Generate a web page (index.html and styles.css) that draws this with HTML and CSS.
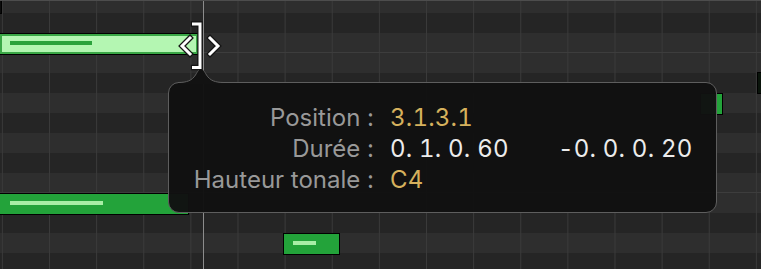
FILE: index.html
```html
<!DOCTYPE html>
<html lang="fr">
  <head>
    <meta charset="UTF-8" />
    <title>Piano Roll</title>
    <link rel="stylesheet" href="styles.css">
  </head>
  <body>
    <div class="roll">
      <div class="rows">
        <div class="row key-white"></div>
        <div class="row key-black"></div>
        <div class="row key-white octave-edge"></div>
        <div class="row key-white"></div>
        <div class="row key-black"></div>
        <div class="row key-white"></div>
        <div class="row key-black"></div>
        <div class="row key-white"></div>
        <div class="row key-black"></div>
        <div class="row key-white octave-edge"></div>
        <div class="row key-white"></div>
        <div class="row key-black"></div>
        <div class="row key-white"></div>
        <div class="row key-black"></div>
      </div>

      <div class="playhead"></div>

      <!-- notes -->
      <div class="note note-edge-tl"></div>
      <div class="note note-edge-tr"></div>
      <div class="note note-selected">
        <span class="vel vel-selected"></span>
      </div>
      <div class="note note-e3">
        <span class="vel vel-e3"></span>
      </div>
      <div class="note note-csharp3">
        <span class="vel vel-csharp3"></span>
      </div>
      <div class="note note-a3"></div>

      <!-- info tooltip -->
      <div class="tip">
        <svg class="tip-notch" width="46" height="16" viewBox="0 0 46 16">
          <path class="notch-fill" d="M0 14.5 C9 14.5 14 12.5 17.5 7 C19.5 3.5 21 1 23 1 C25 1 26.5 3.5 28.5 7 C32 12.5 37 14.5 46 14.5 L46 16 L0 16 Z" />
          <path class="notch-line" d="M0 14.5 C9 14.5 14 12.5 17.5 7 C19.5 3.5 21 1 23 1 C25 1 26.5 3.5 28.5 7 C32 12.5 37 14.5 46 14.5" />
        </svg>
        <div class="tip-grid">
          <span class="tip-label">Position :</span>
          <span class="tip-value gold">3.1.3.1</span>
          <span></span>

          <span class="tip-label">Durée :</span>
          <span class="tip-value">0. 1. 0. 60</span>
          <span class="tip-value">-0. 0. 0. 20</span>

          <span class="tip-label">Hauteur tonale :</span>
          <span class="tip-value gold">C4</span>
          <span></span>
        </div>
      </div>

      <!-- resize cursor -->
      <svg class="resize-cursor" width="48" height="50" viewBox="0 0 48 50">
        <g class="cur-outline">
          <polyline points="15.5,3 22,3 22,46.5 15.5,46.5" />
          <polyline points="12,17 4,25 12,33" />
          <polyline points="32,17 40,25 32,33" />
        </g>
        <g class="cur-stroke">
          <polyline points="15.5,3 22,3 22,46.5 15.5,46.5" />
          <polyline points="12,17 4,25 12,33" />
          <polyline points="32,17 40,25 32,33" />
        </g>
      </svg>
    </div>
  </body>
</html>
```

FILE: styles.css
```css
* {
  box-sizing: border-box;
  margin: 0;
  padding: 0;
}

html,
body {
  background: #262626;
  width: 761px;
  height: 269px;
  overflow: hidden;
}

/* Piano roll canvas */
.roll {
  position: relative;
  width: 761px;
  height: 269px;
  overflow: hidden;
  border-top: 1px solid #4d4d4d;
}

.rows {
  display: flex;
  flex-direction: column;
  margin-top: -8px;
}

.row {
  height: 20px;
  background-image: linear-gradient(to right, #3a3a3a 0, #3a3a3a 1px, transparent 1px);
  background-size: 47.14px 100%;
  background-position: 49px 0;
}

.key-white {
  background-color: #2e2e2e;
}

.key-black {
  background-color: #252525;
}

.octave-edge {
  box-shadow: inset 0 -1px 0 #3d3d3d;
}

.playhead {
  position: absolute;
  left: 203px;
  top: 0;
  width: 1px;
  height: 269px;
  background: #8c8c8c;
}

/* Notes */
.note {
  position: absolute;
  height: 22px;
  border: 1px solid #000;
  background: #23a33a;
}

.vel {
  position: absolute;
  top: 7px;
  height: 4px;
  background: #a8eea6;
}

.note-selected {
  left: -1px;
  top: 32px;
  width: 200px;
  background: #b4f6b2;
  box-shadow: inset 0 0 0 2px #3aa846;
}

.vel-selected {
  left: 10px;
  width: 82px;
  background: #2ba33c;
}

.note-e3 {
  left: -1px;
  top: 192px;
  width: 190px;
}

.vel-e3 {
  left: 10px;
  width: 93px;
}

.note-csharp3 {
  left: 283px;
  top: 232px;
  width: 57px;
}

.vel-csharp3 {
  left: 9px;
  width: 23px;
}

.note-a3 {
  left: 700px;
  top: 92px;
  width: 23px;
}

.note-edge-tl {
  left: -30px;
  top: -9px;
  width: 32px;
  background: #0c0c0c;
}

.note-edge-tr {
  left: 757px;
  top: 71px;
  width: 30px;
  background: #0a140b;
}

/* Tooltip */
.tip {
  position: absolute;
  left: 168px;
  top: 81px;
  width: 549px;
  height: 131px;
  border: 1px solid #5e5e5e;
  border-radius: 11px;
  background: rgba(17, 17, 17, 0.97);
  font-family: Inter, "Liberation Sans", sans-serif;
  font-size: 24px;
}

.tip-notch {
  position: absolute;
  left: 9px;
  top: -15px;
  overflow: visible;
}

.notch-fill {
  fill: #121212;
}

.notch-line {
  fill: none;
  stroke: #5e5e5e;
  stroke-width: 1;
}

.tip-grid {
  display: grid;
  grid-template-columns: 221px 168px 1fr;
  padding-top: 19px;
  line-height: 31px;
}

.tip-label {
  text-align: right;
  padding-right: 16px;
  color: #999;
}

.tip-value {
  color: #ececec;
  font-variant-numeric: tabular-nums;
  letter-spacing: 0.2px;
}

.tip-value.gold {
  color: #d6b15d;
}

/* Resize cursor */
.resize-cursor {
  position: absolute;
  left: 178px;
  top: 20px;
}

.resize-cursor polyline {
  fill: none;
  stroke-linejoin: miter;
  stroke-linecap: square;
}

.cur-outline polyline {
  stroke: #151515;
  stroke-width: 5.5;
}

.cur-stroke polyline {
  stroke: #fff;
  stroke-width: 3;
}
```
